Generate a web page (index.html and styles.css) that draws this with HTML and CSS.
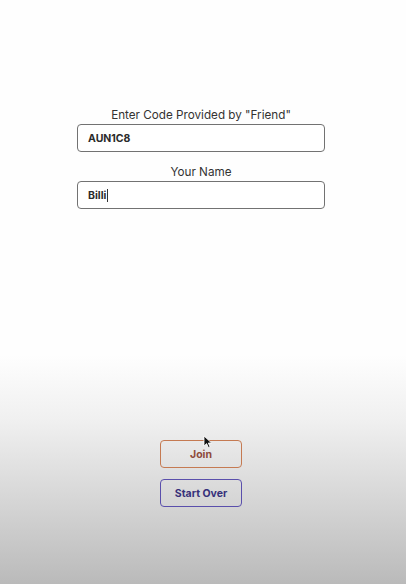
FILE: index.html
```
<!DOCTYPE html>
<html>
<head>
<meta charset="utf-8">
<link rel="stylesheet" href="styles.css">
</head>
<body>
<div class="page">
  <form class="form">
    <label class="label" for="code">Enter Code Provided by "Friend"</label>
    <div class="input"><span class="value">AUN1C8</span></div>
    <label class="label label-second" for="name">Your Name</label>
    <div class="input"><span class="value">Billi</span><span class="caret"></span></div>
  </form>
  <div class="actions">
    <div class="btn btn-join">Join
      <svg class="pointer" width="10" height="14" viewBox="0 0 10 14"><path d="M1 1 L1 11 L3.6 8.6 L5.4 12.6 L7 11.9 L5.3 8 L8.6 8 Z" fill="#111" stroke="#fff" stroke-width="0.8"/></svg>
    </div>
    <div class="btn btn-over">Start Over</div>
  </div>
</div>
</body>
</html>
```
FILE: styles.css
```
* { box-sizing: border-box; }
html, body { margin: 0; padding: 0; }
body { font-family: Inter, "Noto Sans", sans-serif; }
.page {
  height: 584px;
  background: linear-gradient(to bottom, #fefefe 0, #fefefe 355px, #f0f0f0 420px, #d6d6d6 500px, #bababa 584px);
  display: flex;
  flex-direction: column;
  align-items: center;
  padding-top: 107px;
  padding-right: 4px;
}
.form {
  width: 248px;
  display: flex;
  flex-direction: column;
  align-items: stretch;
}
.label {
  display: block;
  text-align: center;
  font-size: 11.7px;
  line-height: 17px;
  color: #333;
}
.label-second { margin-top: 12px; }
.input {
  height: 28px;
  border: 1.4px solid #727272;
  border-radius: 4px;
  background: #fff;
  display: flex;
  align-items: center;
  padding-left: 10px;
}
.value {
  font-size: 10.5px;
  font-weight: 700;
  color: #2b2b2b;
}
.caret {
  width: 1px;
  height: 13px;
  background: #333;
  margin-left: 1px;
}
.actions {
  margin-top: 231px;
  display: flex;
  flex-direction: column;
  gap: 11px;
}
.btn {
  position: relative;
  width: 82px;
  height: 28px;
  border-radius: 4px;
  display: flex;
  align-items: center;
  justify-content: center;
  font-size: 10.5px;
  font-weight: 700;
}
.btn-join { border: 1.6px solid #c57a52; color: #8f4a3b; }
.btn-over { border: 1.6px solid #5a4fac; color: #36307a; }
.pointer { position: absolute; left: 42px; top: -6px; }
```
